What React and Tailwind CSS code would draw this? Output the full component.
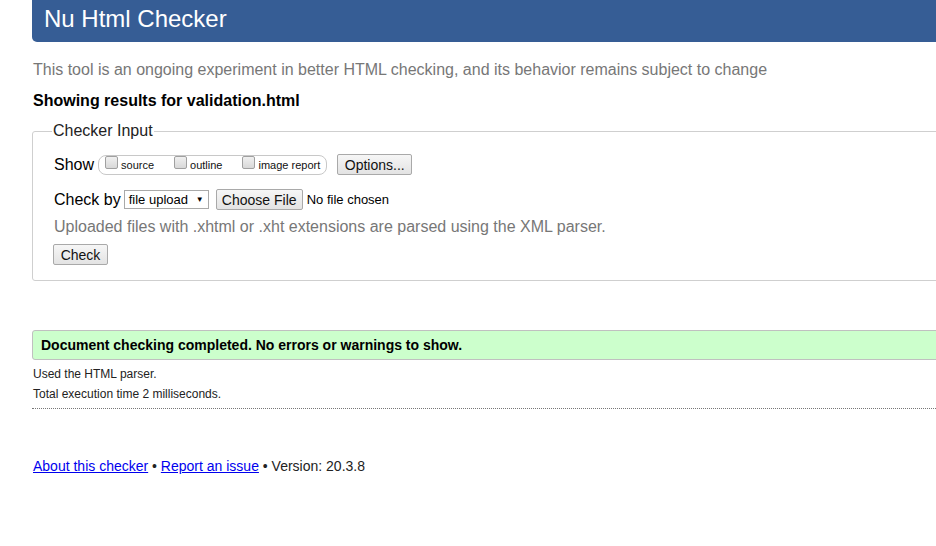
import React from "react";

const Checkbox = ({ label }) => (
  <label className="flex items-center gap-[3px]">
    <span className="mt-[-6px] h-[13px] w-[13px] rounded-[2px] border border-[#a0a0a0] bg-gradient-to-b from-[#f0f0f0] to-[#d8d8d8]" />
    <span className="text-[11px] text-[#111]">{label}</span>
  </label>
);

const Btn = ({ children, className = "" }) => (
  <button
    type="button"
    className={
      "rounded-[2px] border border-[#a9a9a9] bg-gradient-to-b from-[#f6f6f6] to-[#e3e3e3] text-[14px] leading-none text-[#111] " +
      className
    }
  >
    {children}
  </button>
);

export default function App() {
  return (
    <div className="h-[546px] w-[936px] overflow-hidden bg-white font-['Liberation_Sans',Arial,sans-serif] text-black">
      <div className="ml-8 w-[980px]">
        {/* Header */}
        <h1 className="flex h-[42px] items-center rounded-b-[5px] bg-[#365d95] pl-3 pb-[4px] text-[24px] text-white">
          Nu Html Checker
        </h1>

        <p className="mt-[18px] pl-[1px] text-[16px] leading-[20px] text-[#777]">
          This tool is an ongoing experiment in better HTML checking, and its behavior remains subject to change
        </p>
        <p className="mt-[11px] pl-[1px] text-[16px] font-bold leading-[20px]">
          Showing results for validation.html
        </p>

        {/* Checker Input */}
        <fieldset className="mt-[10px] h-[160px] rounded-[3px] border border-[#cfcfcf] px-[21px]">
          <legend className="ml-[-2px] px-[1px] text-[16px] leading-[20px] text-[#222]">Checker Input</legend>

          <div className="mt-[13px] flex items-center">
            <span className="text-[16px] leading-[20px]">Show</span>
            <div className="ml-[4px] flex h-[20px] items-center gap-[20px] rounded-[8px] border border-[#c8c8c8] px-[6px] pt-[2px]">
              <Checkbox label="source" />
              <Checkbox label="outline" />
              <Checkbox label="image report" />
            </div>
            <Btn className="ml-[10px] h-[21px] w-[75px]">Options...</Btn>
          </div>

          <div className="mt-[14px] flex items-center">
            <span className="text-[16px] leading-[20px]">Check by</span>
            <div className="ml-[3px] flex h-[19px] w-[85px] items-center justify-between border border-[#a9a9a9] px-[4px] text-[13px]">
              <span>file upload</span>
              <span className="text-[8px]">▼</span>
            </div>
            <Btn className="ml-[7px] h-[21px] w-[87px]">Choose File</Btn>
            <span className="ml-[4px] text-[13px]">No file chosen</span>
          </div>

          <p className="mt-[7px] text-[16px] leading-[20px] text-[#777]">
            Uploaded files with .xhtml or .xht extensions are parsed using the XML parser.
          </p>

          <Btn className="ml-[-1px] mt-[7px] h-[21px] w-[55px]">Check</Btn>
        </fieldset>

        {/* Result */}
        <div className="mt-[49px] flex h-[30px] items-center rounded-l-[3px] border border-[#c0c0c0] bg-[#ccffcc] pl-[8px] text-[14px] font-bold">
          Document checking completed. No errors or warnings to show.
        </div>
        <p className="mt-[6px] pl-[1px] text-[12px] leading-[16px] text-[#222]">Used the HTML parser.</p>
        <p className="mt-[4px] pl-[1px] text-[12px] leading-[16px] text-[#222]">Total execution time 2 milliseconds.</p>
        <div className="mt-[6px] border-b border-dotted border-[#777]" />

        {/* Footer */}
        <p className="mt-[48px] pl-[1px] text-[14px] leading-[18px] text-[#222]">
          <a href="#" className="text-[#0000ee] underline">About this checker</a> •{" "}
          <a href="#" className="text-[#0000ee] underline">Report an issue</a> • Version: 20.3.8
        </p>
      </div>
    </div>
  );
}
